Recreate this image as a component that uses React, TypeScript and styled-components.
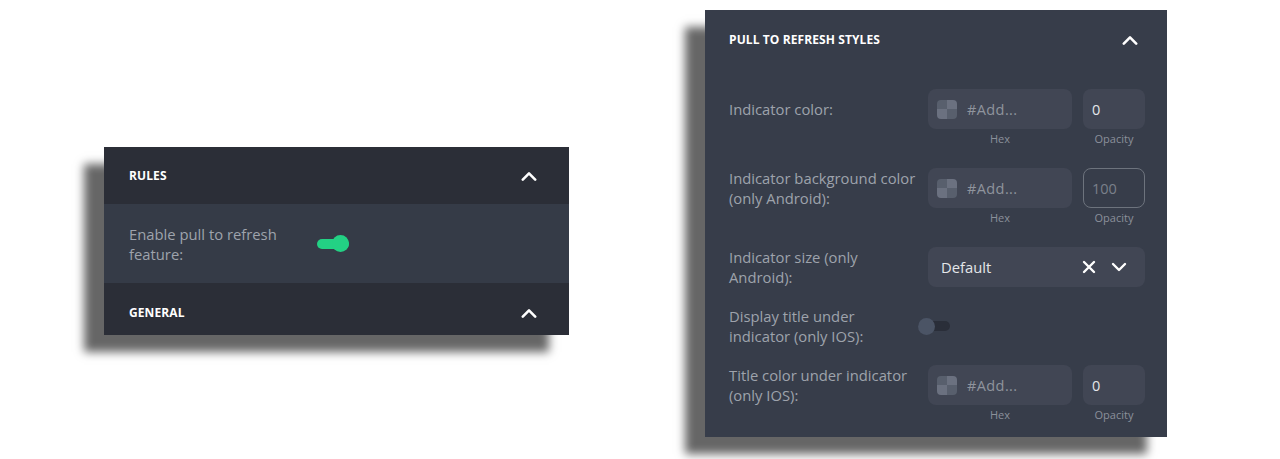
import React from "react";
import styled, { createGlobalStyle } from "styled-components";

const GlobalStyle = createGlobalStyle`
  html, body { margin: 0; padding: 0; background: #ffffff; }
  body { font-family: "Open Sans", "Noto Sans", sans-serif; -webkit-font-smoothing: antialiased; }
  * { box-sizing: border-box; }
`;

const Page = styled.div`
  display: flex;
  align-items: flex-start;
  gap: 136px;
  padding: 10px 0 0 104px;
  height: 459px;
`;

const Panel = styled.section<{ $width: number; $top: number; $bg: string }>`
  width: ${(p) => p.$width}px;
  margin-top: ${(p) => p.$top}px;
  background: ${(p) => p.$bg};
  box-shadow: -20px 17px 9px rgba(0, 0, 0, 0.6);
  display: flex;
  flex-direction: column;
`;

const Header = styled.header<{ $height: number; $bg: string; $padTop: number; $padLeft: number; $padRight: number }>`
  height: ${(p) => p.$height}px;
  background: ${(p) => p.$bg};
  display: flex;
  align-items: flex-start;
  justify-content: space-between;
  padding: ${(p) => `${p.$padTop}px ${p.$padRight}px 0 ${p.$padLeft}px`};
`;

const Title = styled.h3`
  margin: 0;
  font-size: 12px;
  line-height: 17px;
  font-weight: 700;
  color: #ffffff;
  text-transform: uppercase;
  letter-spacing: 0.1px;
`;

const IconBox = styled.span`
  display: flex;
  align-items: center;
  justify-content: center;
  height: 17px;
`;

const RuleRow = styled.div`
  height: 79px;
  background: #353b47;
  padding: 0 25px;
  display: flex;
  align-items: center;
`;

const ToggleField = styled.div<{ $col: number }>`
  display: grid;
  grid-template-columns: ${(p) => p.$col}px auto;
  align-items: center;
`;

const Label = styled.label`
  font-size: 14.8px;
  line-height: 20px;
  color: #9ea3ac;
  min-height: 40px;
  display: flex;
  align-items: center;
`;

const Switch = styled.span<{ $on: boolean }>`
  position: relative;
  display: block;
  width: 32px;
  height: 17px;
  &::before {
    content: "";
    position: absolute;
    left: 0;
    right: 0;
    top: 3.5px;
    height: 10px;
    border-radius: 5px;
    background: ${(p) => (p.$on ? "#23d184" : "#2a2e39")};
  }
  &::after {
    content: "";
    position: absolute;
    top: 0;
    ${(p) => (p.$on ? "right: 0;" : "left: 0;")}
    width: 17px;
    height: 17px;
    border-radius: 50%;
    background: ${(p) => (p.$on ? "#23d184" : "#4b5465")};
  }
`;

const Body = styled.div`
  display: flex;
  flex-direction: column;
  gap: 19px;
  padding: 19px 22px 12px 24px;
`;

const Field = styled.div`
  display: grid;
  grid-template-columns: 199px 1fr;
  align-items: start;
`;

const Controls = styled.div`
  display: flex;
  flex-direction: column;
`;

const InputRow = styled.div`
  display: flex;
  gap: 11px;
`;

const Box = styled.div<{ $width: number; $outlined?: boolean }>`
  width: ${(p) => p.$width}px;
  height: 40px;
  border-radius: 8px;
  background: ${(p) => (p.$outlined ? "transparent" : "#414654")};
  border: ${(p) => (p.$outlined ? "1px solid #6d737d" : "1px solid transparent")};
  display: flex;
  align-items: center;
  gap: 10px;
  padding: 0 11px 0 8px;
  font-size: 14.5px;
`;

const Swatch = styled.span`
  width: 20px;
  height: 19px;
  border-radius: 4px;
  overflow: hidden;
  display: grid;
  grid-template-columns: 1fr 1fr;
  grid-template-rows: 1fr 1fr;
`;

const Cell = styled.span<{ $light: boolean }>`
  background: ${(p) => (p.$light ? "#6b7180" : "#585f6d")};
`;

const Placeholder = styled.span`
  color: #8f949d;
  letter-spacing: 0.4px;
`;

const Value = styled.span<{ $muted?: boolean }>`
  color: ${(p) => (p.$muted ? "#7a808a" : "#e4e6ea")};
`;

const CaptionRow = styled.div`
  display: flex;
  gap: 11px;
`;

const Caption = styled.span<{ $width: number }>`
  width: ${(p) => p.$width}px;
  text-align: center;
  font-size: 11px;
  line-height: 20px;
  color: #8b909a;
`;

const Select = styled.div`
  width: 217px;
  height: 40px;
  border-radius: 8px;
  background: #414654;
  display: flex;
  align-items: center;
  padding: 0 18px 0 13px;
  font-size: 14.8px;
  color: #e4e6ea;
`;

const SelectValue = styled.span`
  flex: 1;
`;

const SelectIcons = styled.span`
  display: flex;
  align-items: center;
  gap: 15px;
`;

const ChevronUp = () => (
  <svg width="16" height="10" viewBox="0 0 16 10">
    <polyline points="1.8,8.6 8,2.4 14.2,8.6" fill="none" stroke="#ffffff" strokeWidth="2.6" strokeLinecap="round" strokeLinejoin="round" />
  </svg>
);

const ChevronDown = () => (
  <svg width="16" height="10" viewBox="0 0 16 10">
    <polyline points="2,2 8,8 14,2" fill="none" stroke="#ffffff" strokeWidth="2.4" strokeLinecap="round" strokeLinejoin="round" />
  </svg>
);

const Cross = () => (
  <svg width="14" height="14" viewBox="0 0 14 14">
    <path d="M2 2 L12 12 M12 2 L2 12" fill="none" stroke="#ffffff" strokeWidth="2.4" strokeLinecap="round" />
  </svg>
);

const ColorSwatch = () => (
  <Swatch>
    <Cell $light={false} />
    <Cell $light />
    <Cell $light />
    <Cell $light={false} />
  </Swatch>
);

const ColorField = ({ label, opacity, outlined }: { label: React.ReactNode; opacity: string; outlined?: boolean }) => (
  <Field>
    <Label>{label}</Label>
    <Controls>
      <InputRow>
        <Box $width={144}>
          <ColorSwatch />
          <Placeholder>#Add...</Placeholder>
        </Box>
        <Box $width={62} $outlined={outlined}>
          <Value $muted={outlined}>{opacity}</Value>
        </Box>
      </InputRow>
      <CaptionRow>
        <Caption $width={144}>Hex</Caption>
        <Caption $width={62}>Opacity</Caption>
      </CaptionRow>
    </Controls>
  </Field>
);

export default function App() {
  return (
    <>
      <GlobalStyle />
      <Page>
        <Panel $width={465} $top={137} $bg="#2b2e37">
          <Header $height={57} $bg="#2b2e37" $padTop={20} $padLeft={25} $padRight={32}>
            <Title>Rules</Title>
            <IconBox>
              <ChevronUp />
            </IconBox>
          </Header>
          <RuleRow>
            <ToggleField $col={188}>
              <Label>
                Enable pull to refresh
                <br />
                feature:
              </Label>
              <Switch $on />
            </ToggleField>
          </RuleRow>
          <Header $height={52} $bg="#2b2e37" $padTop={21} $padLeft={25} $padRight={32}>
            <Title>General</Title>
            <IconBox>
              <ChevronUp />
            </IconBox>
          </Header>
        </Panel>

        <Panel $width={462} $top={0} $bg="#373d4a">
          <Header $height={60} $bg="#373d4a" $padTop={21} $padLeft={24} $padRight={29}>
            <Title>Pull to refresh styles</Title>
            <IconBox>
              <ChevronUp />
            </IconBox>
          </Header>
          <Body>
            <ColorField label="Indicator color:" opacity="0" />
            <ColorField
              label={
                <span>
                  Indicator background color
                  <br />
                  (only Android):
                </span>
              }
              opacity="100"
              outlined
            />
            <Field>
              <Label>
                <span>
                  Indicator size (only
                  <br />
                  Android):
                </span>
              </Label>
              <Select>
                <SelectValue>Default</SelectValue>
                <SelectIcons>
                  <Cross />
                  <ChevronDown />
                </SelectIcons>
              </Select>
            </Field>
            <ToggleField $col={189}>
              <Label>
                <span>
                  Display title under
                  <br />
                  indicator (only IOS):
                </span>
              </Label>
              <Switch $on={false} />
            </ToggleField>
            <ColorField
              label={
                <span>
                  Title color under indicator
                  <br />
                  (only IOS):
                </span>
              }
              opacity="0"
            />
          </Body>
        </Panel>
      </Page>
    </>
  );
}
